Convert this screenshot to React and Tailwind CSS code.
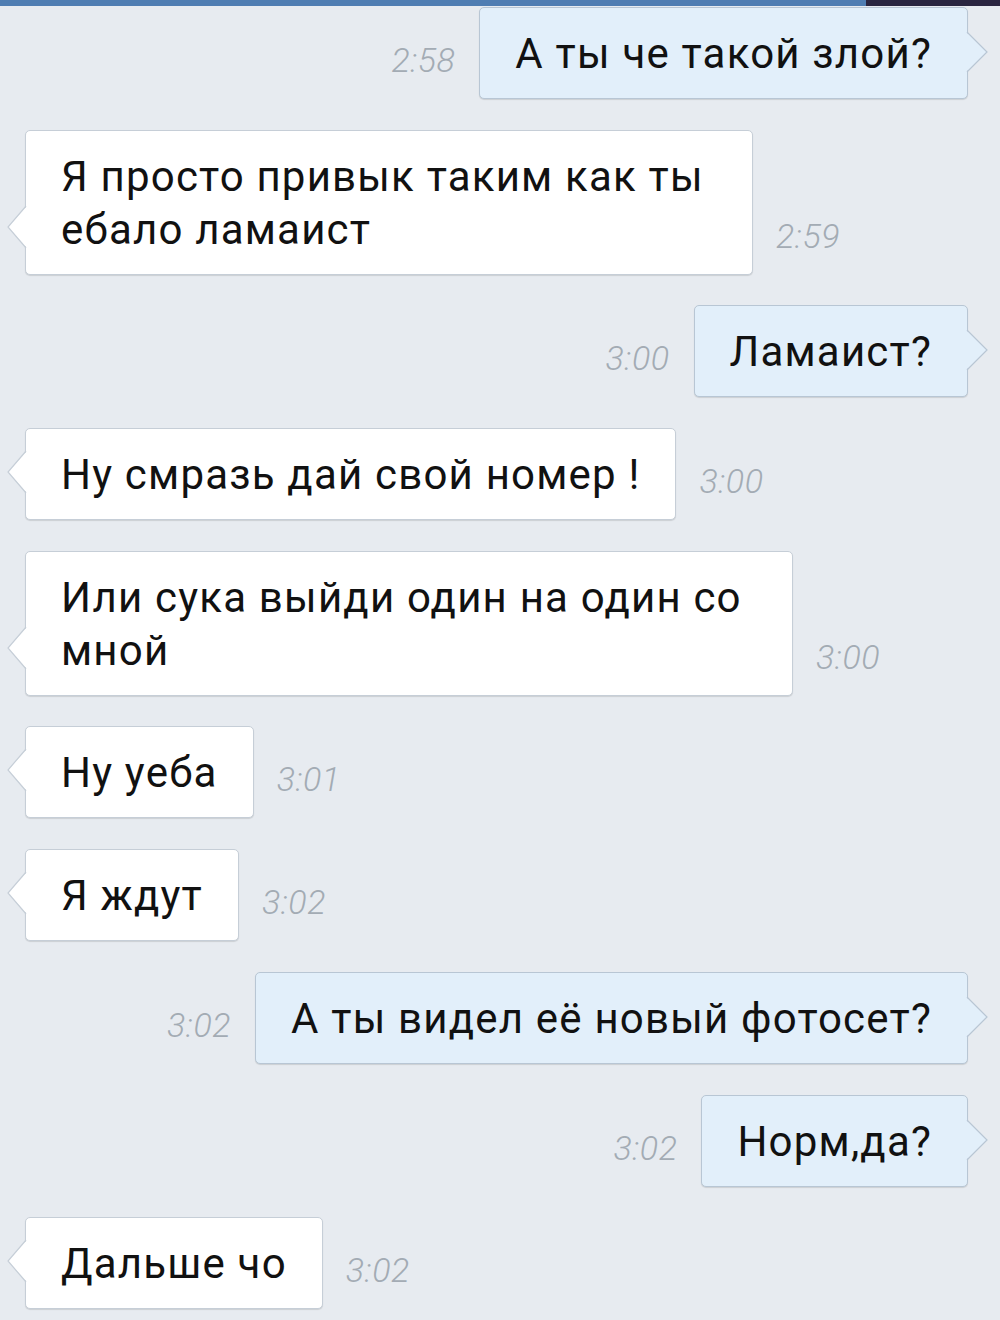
const MESSAGES = [
  { out: true, text: 'А ты че такой злой?', time: '2:58' },
  { out: false, text: 'Я просто привык таким как ты ебало ламаист', time: '2:59', width: 'w-[728px]' },
  { out: true, text: 'Ламаист?', time: '3:00' },
  { out: false, text: 'Ну смразь дай свой номер !', time: '3:00' },
  { out: false, text: 'Или сука выйди один на один со мной', time: '3:00', width: 'w-[768px]' },
  { out: false, text: 'Ну уеба', time: '3:01' },
  { out: false, text: 'Я ждут', time: '3:02' },
  { out: true, text: 'А ты видел её новый фотосет?', time: '3:02' },
  { out: true, text: 'Норм,да?', time: '3:02' },
  { out: false, text: 'Дальше чо', time: '3:02' },
];

const Tail = ({ out }) => {
  const fill = out ? '#e2effa' : '#ffffff';
  const stroke = out ? '#b8c6d4' : '#c6ced7';
  if (out) {
    return (
      <svg className="absolute -right-[21px] bottom-[26px]" width="22" height="40" viewBox="0 0 22 40">
        <polygon points="0,0 21,20 0,40" fill={fill} />
        <polyline points="1,0 21,20 1,40" fill="none" stroke={stroke} strokeWidth="1.2" />
      </svg>
    );
  }
  return (
    <svg className="absolute -left-[19px] bottom-[26px]" width="20" height="42" viewBox="0 0 20 42">
      <polygon points="20,0 1,21 20,42" fill={fill} />
      <polyline points="19,0 1,21 19,42" fill="none" stroke={stroke} strokeWidth="1.2" />
    </svg>
  );
};

const Bubble = ({ msg }) => {
  const time = (
    <span className="mb-[22px] text-[34px] leading-[34px] font-light italic tracking-[0.5px] text-[#a3abb4] shrink-0">
      {msg.time}
    </span>
  );
  const bubble = (
    <div
      className={`relative rounded-[5px] border px-[35px] pt-[19px] pb-[18px] text-[42px] leading-[53px] tracking-[1.2px] text-[#111] shadow-[0_1px_1px_rgba(0,0,0,0.12)] ${
        msg.out ? 'bg-[#e2effa] border-[#b8c6d4]' : 'bg-white border-[#c6ced7]'
      } ${msg.width || ''}`}
    >
      {msg.text}
      <Tail out={msg.out} />
    </div>
  );
  if (msg.out) {
    return (
      <div className="flex items-end justify-end gap-[24px] pr-[32px]">
        {time}
        {bubble}
      </div>
    );
  }
  return (
    <div className="flex items-end gap-[23px] pl-[25px]">
      {bubble}
      {time}
    </div>
  );
};

export default function App() {
  return (
    <div className="w-[1000px] h-[1320px] overflow-hidden bg-[#e7ebf0]" style={{ fontFamily: 'Roboto, "Noto Sans", sans-serif' }}>
      <div className="flex h-[6px]">
        <div className="flex-1 bg-[#4f7db2]" />
        <div className="w-[134px] bg-[#2a2540]" />
      </div>
      <div className="flex flex-col gap-[30.7px] pt-[1px]">
        {MESSAGES.map((m, i) => (
          <Bubble key={i} msg={m} />
        ))}
      </div>
    </div>
  );
}
